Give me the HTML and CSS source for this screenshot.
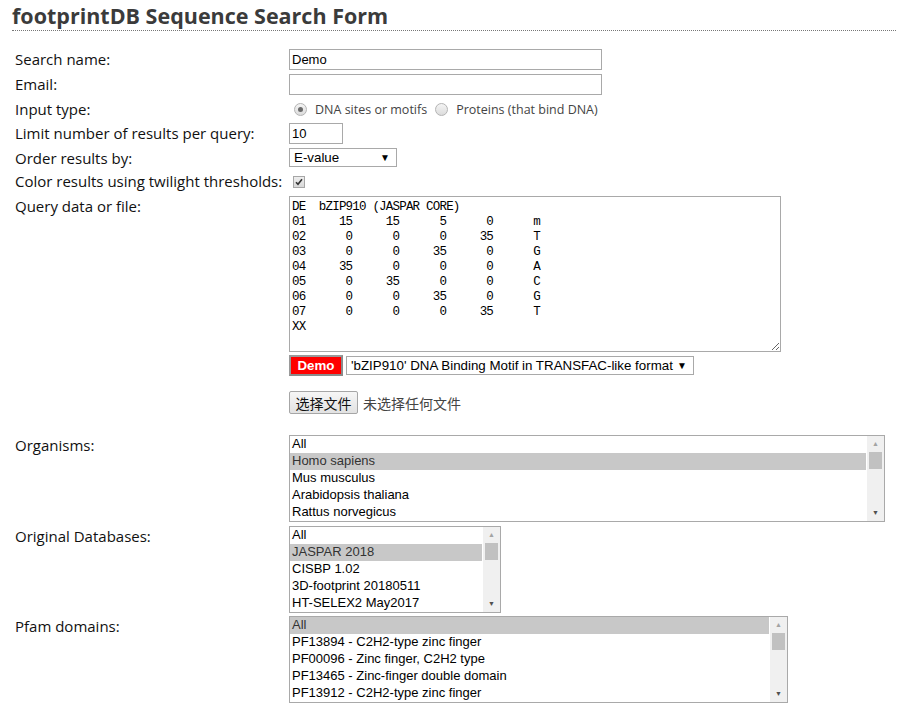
FILE: index.html
```html
<!DOCTYPE html>
<html lang="en">
<head>
    <meta charset="UTF-8">
    <title>footprintDB Sequence Search Form</title>
    <link rel="stylesheet" href="styles.css">
</head>
<body>
<div class="page">
    <h2 class="title">footprintDB Sequence Search Form</h2>

    <form class="search-form">
        <div class="row">
            <label>Search name:</label>
            <div class="field"><input type="text" class="text-input" value="Demo"></div>
        </div>
        <div class="row">
            <label>Email:</label>
            <div class="field"><input type="text" class="text-input"></div>
        </div>
        <div class="row">
            <label>Input type:</label>
            <div class="field radios">
                <span class="radio checked"></span><span class="radio-label">DNA sites or motifs</span>
                <span class="radio"></span><span class="radio-label">Proteins (that bind DNA)</span>
            </div>
        </div>
        <div class="row">
            <label>Limit number of results per query:</label>
            <div class="field"><input type="text" class="text-input short" value="10"></div>
        </div>
        <div class="row">
            <label>Order results by:</label>
            <div class="field"><div class="dropdown order">E-value<span class="arrow">▼</span></div></div>
        </div>
        <div class="row">
            <label>Color results using twilight thresholds:</label>
            <div class="field check-field">
                <span class="checkbox">
                    <svg width="8" height="8" viewBox="0 0 8 8"><path d="M1 4.2 L3 6.3 L7 1.3" fill="none" stroke="#333" stroke-width="1.6"/></svg>
                </span>
            </div>
        </div>
        <div class="row query-row">
            <label>Query data or file:</label>
            <div class="field">
                <textarea class="query" spellcheck="false">DE  bZIP910 (JASPAR CORE)
01     15     15      5      0      m
02      0      0      0     35      T
03      0      0     35      0      G
04     35      0      0      0      A
05      0     35      0      0      C
06      0      0     35      0      G
07      0      0      0     35      T
XX</textarea>
                <div class="demo-line">
                    <button type="button" class="demo-btn">Demo</button>
                    <div class="dropdown demo-select">'bZIP910' DNA Binding Motif in TRANSFAC-like format<span class="arrow">▼</span></div>
                </div>
                <div class="file-line">
                    <button type="button" class="file-btn">选择文件</button>
                    <span class="file-name">未选择任何文件</span>
                </div>
            </div>
        </div>
        <div class="row">
            <label>Organisms:</label>
            <div class="field">
                <div class="listbox organisms">
                    <div class="options">
                        <div class="option">All</div>
                        <div class="option selected">Homo sapiens</div>
                        <div class="option">Mus musculus</div>
                        <div class="option">Arabidopsis thaliana</div>
                        <div class="option">Rattus norvegicus</div>
                    </div>
                    <div class="scrollbar">
                        <span class="up">▲</span><span class="thumb"></span><span class="down">▼</span>
                    </div>
                </div>
            </div>
        </div>
        <div class="row db-row">
            <label>Original Databases:</label>
            <div class="field">
                <div class="listbox databases">
                    <div class="options">
                        <div class="option">All</div>
                        <div class="option selected">JASPAR 2018</div>
                        <div class="option">CISBP 1.02</div>
                        <div class="option">3D-footprint 20180511</div>
                        <div class="option">HT-SELEX2 May2017</div>
                    </div>
                    <div class="scrollbar">
                        <span class="up">▲</span><span class="thumb"></span><span class="down">▼</span>
                    </div>
                </div>
            </div>
        </div>
        <div class="row">
            <label>Pfam domains:</label>
            <div class="field">
                <div class="listbox pfam">
                    <div class="options">
                        <div class="option selected">All</div>
                        <div class="option">PF13894 - C2H2-type zinc finger</div>
                        <div class="option">PF00096 - Zinc finger, C2H2 type</div>
                        <div class="option">PF13465 - Zinc-finger double domain</div>
                        <div class="option">PF13912 - C2H2-type zinc finger</div>
                    </div>
                    <div class="scrollbar">
                        <span class="up">▲</span><span class="thumb"></span><span class="down">▼</span>
                    </div>
                </div>
            </div>
        </div>
    </form>
</div>
</body>
</html>
```

FILE: styles.css
```css
* {
    box-sizing: border-box;
}

body {
    margin: 0;
    background: #fff;
    color: #111;
    font-family: 'Open Sans', 'Noto Sans', sans-serif;
}

.page {
    padding: 0 2px 0 12px;
}

.title {
    margin: 0;
    padding-top: 3px;
    height: 31px;
    font-size: 21.5px;
    line-height: 26px;
    font-weight: bold;
    color: #3b3b3b;
    border-bottom: 1px dotted #777;
}

.search-form {
    margin: 18px 0 0 3px;
}

.row {
    display: grid;
    grid-template-columns: 274px auto;
    margin-bottom: 4px;
}

.row.db-row {
    margin-bottom: 3px;
}

.row label {
    height: 19px;
    font-size: 15px;
    line-height: 20px;
    white-space: nowrap;
}

.field {
    display: flex;
    flex-direction: column;
    align-items: flex-start;
}

.text-input {
    width: 313px;
    height: 21px;
    margin: 0;
    padding: 1px 2px;
    border: 1px solid #a9a9a9;
    font-family: 'Liberation Sans', Arial, sans-serif;
    font-size: 13px;
    color: #000;
    outline: none;
}

.text-input.short {
    width: 54px;
}

/* radio buttons */
.radios {
    flex-direction: row;
    align-items: center;
    height: 20px;
    padding-left: 5px;
}

.radio {
    width: 13px;
    height: 13px;
    border-radius: 50%;
    border: 1px solid #b4b4b4;
    background: linear-gradient(#f4f4f4, #dcdcdc);
    display: flex;
    align-items: center;
    justify-content: center;
}

.radio.checked:after {
    content: "";
    width: 5px;
    height: 5px;
    border-radius: 50%;
    background: #6a6a6a;
}

.radio-label {
    font-size: 12.5px;
    color: #444;
    margin: 0 8px 0 8px;
}

/* checkbox */
.check-field {
    height: 21px;
    justify-content: center;
    padding-left: 4px;
}

.checkbox {
    width: 12px;
    height: 12px;
    border: 1px solid #a6a6a6;
    background: linear-gradient(#eee, #d8d8d8);
    display: flex;
    align-items: center;
    justify-content: center;
}

/* select look-alikes */
.dropdown {
    position: relative;
    height: 19px;
    border: 1px solid #a9a9a9;
    background: #fff;
    font-family: 'Liberation Sans', Arial, sans-serif;
    font-size: 13.33px;
    line-height: 17px;
    padding-left: 4px;
    color: #000;
    white-space: nowrap;
}

.dropdown .arrow {
    position: absolute;
    right: 6px;
    top: 0;
    font-size: 10px;
}

.dropdown.order {
    width: 108px;
}

.query {
    display: block;
    width: 492px;
    height: 156px;
    margin: 0;
    padding: 3px 2px;
    border: 1px solid #a9a9a9;
    font-family: 'Liberation Mono', monospace;
    font-size: 12.5px;
    letter-spacing: -0.8px;
    line-height: 15px;
    color: #000;
    outline: none;
}

.demo-line {
    display: flex;
    align-items: center;
    margin-top: 3px;
    gap: 3px;
}

.demo-btn {
    width: 54px;
    height: 21px;
    margin: 0;
    padding: 0;
    border: 2px solid #9a9a9a;
    border-right-color: #8a8a8a;
    border-bottom-color: #8a8a8a;
    background: #f00;
    color: #fff;
    font-family: 'Liberation Sans', Arial, sans-serif;
    font-weight: bold;
    font-size: 13.33px;
}

.dropdown.demo-select {
    width: 348px;
    padding-left: 4px;
}

.file-line {
    display: flex;
    align-items: center;
    margin-top: 15px;
    padding-bottom: 17px;
}

.file-btn {
    width: 69px;
    height: 23px;
    margin: 0;
    padding: 0;
    border: 1px solid #a6a6a6;
    border-radius: 2px;
    background: linear-gradient(#f6f6f6, #e2e2e2);
    font-family: 'Noto Sans CJK SC', sans-serif;
    font-size: 14px;
    line-height: 20px;
    color: #111;
}

.file-name {
    margin-left: 5px;
    font-family: 'Noto Sans CJK SC', sans-serif;
    font-size: 14px;
    color: #444;
}

/* list boxes */
.listbox {
    display: flex;
    height: 87px;
    border: 1px solid #a9a9a9;
    font-family: 'Liberation Sans', Arial, sans-serif;
    font-size: 13px;
}

.listbox.organisms {
    width: 596px;
}

.listbox.databases {
    width: 212px;
}

.listbox.pfam {
    width: 499px;
}

.options {
    flex: 1;
    padding-right: 1px;
}

.option {
    height: 17px;
    line-height: 16px;
    padding-left: 2px;
    color: #000;
    white-space: nowrap;
}

.option.selected {
    background: #c8c8c8;
    color: #333;
}

.scrollbar {
    width: 17px;
    background: #f0f0f0;
    display: flex;
    flex-direction: column;
    align-items: center;
}

.scrollbar .up,
.scrollbar .down {
    height: 16px;
    line-height: 16px;
    font-size: 7px;
    color: #a3a3a3;
}

.scrollbar .down {
    margin-top: auto;
    color: #505050;
}

.scrollbar .thumb {
    width: 13px;
    height: 17px;
    background: #c1c1c1;
}
```
